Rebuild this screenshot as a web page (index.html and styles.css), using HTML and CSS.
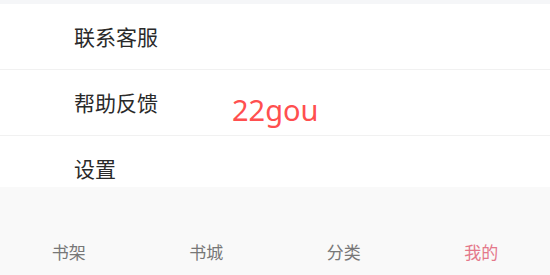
FILE: index.html
```html
<html>
    <head>
        <meta charset="utf-8">
        <link rel="stylesheet" href="styles.css">
    </head>
    <body>
        <div class="topStrip"></div>
        <div class="menuList">
            <div class="menuItem">联系客服</div>
            <div class="menuItem">帮助反馈<span class="brand">22gou</span></div>
            <div class="menuItem">设置</div>
        </div>

        <div class="tabBar">
            <div class="tab">书架</div>
            <div class="tab">书城</div>
            <div class="tab">分类</div>
            <div class="tab active">我的</div>
        </div>
    </body>
</html>
```

FILE: styles.css
```css
body {
    margin: 0;
    background: white;
    font-family: "Noto Sans CJK SC", "Noto Sans", sans-serif;
    height: 275px;
    overflow: hidden;
}

.topStrip {
    height: 4px;
    background: #f5f6f8;
}

.menuItem {
    display: flex;
    align-items: center;
    height: 63px;
    padding-left: 74px;
    padding-bottom: 2px;
    font-size: 21px;
    color: #2a2a2a;
    border-bottom: 1px solid #f1f1f1;
}

.brand {
    margin-left: 74px;
    margin-top: 15px;
    font-family: "Noto Sans", sans-serif;
    font-size: 29px;
    color: #ff4f4f;
}

.tabBar {
    position: fixed;
    left: 0;
    right: 0;
    bottom: 0;
    height: 88px;
    background: #f9f9f9;
    display: grid;
    grid-template-columns: repeat(4, 1fr);
    align-items: end;
}

.tab {
    text-align: center;
    font-size: 17px;
    line-height: 20px;
    padding-bottom: 13px;
    color: #777;
}

.tab.active {
    color: #e4788a;
}
```
